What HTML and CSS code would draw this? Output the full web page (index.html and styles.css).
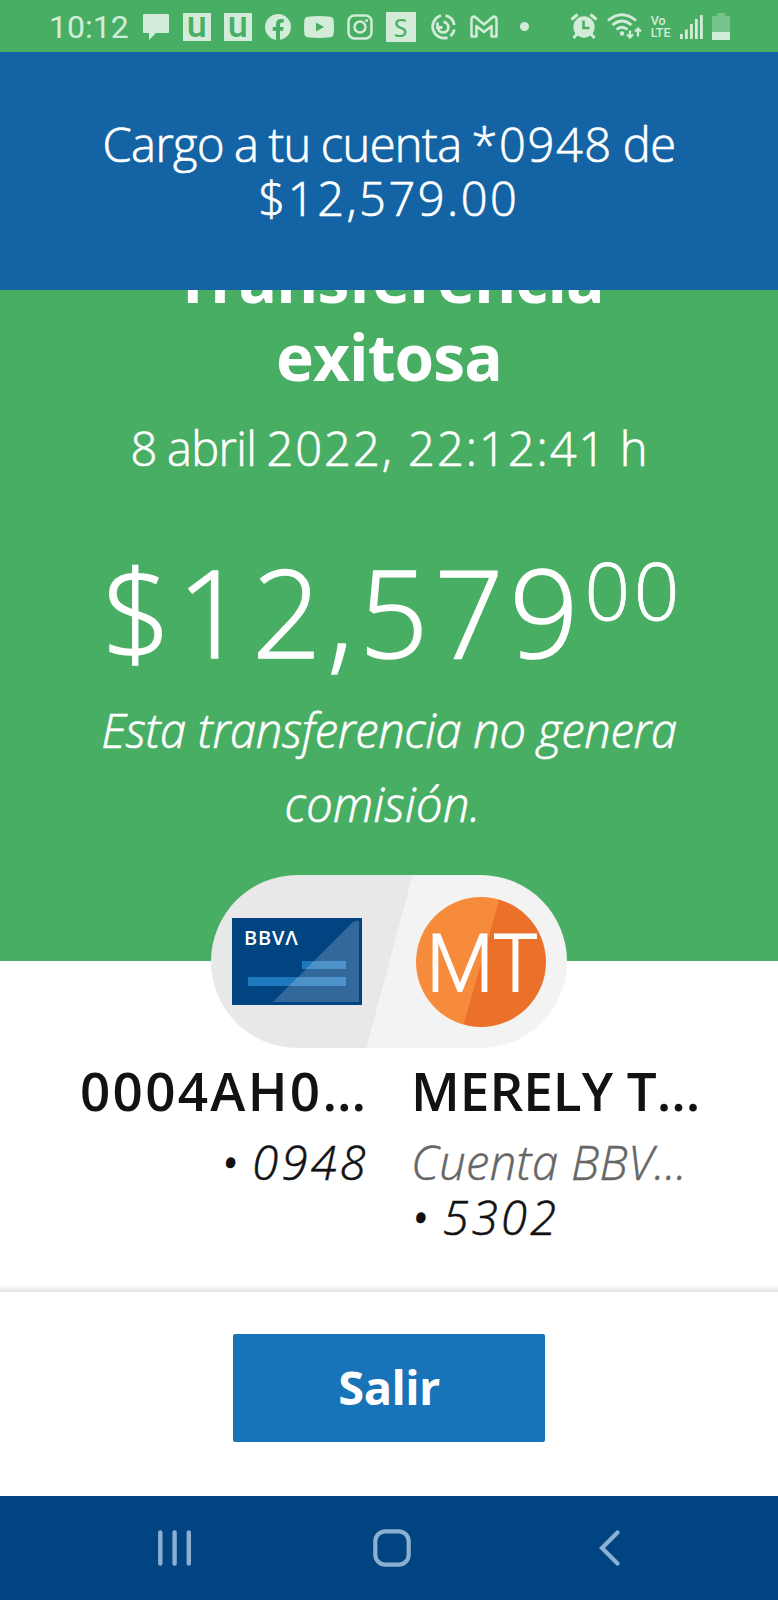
FILE: index.html
```html
<!DOCTYPE html>
<html lang="es">
<head>
<meta charset="UTF-8" />
<meta name="viewport" content="width=device-width, initial-scale=1" />
<title>Transferencia exitosa</title>
<link rel="stylesheet" href="styles.css">
</head>
<body>

<!-- Barra de estado -->
<div class="status-bar">
  <span class="clock">10:12</span>
  <div class="status-icons">
    <svg width="28" height="28" viewBox="0 0 28 28"><path fill="currentColor" d="M2 1h24a1 1 0 0 1 1 1v17a1 1 0 0 1-1 1H14l-7 7v-7H2a1 1 0 0 1-1-1V2a1 1 0 0 1 1-1z"/></svg>
    <span class="tile tile-u">u</span>
    <span class="tile tile-u">u</span>
    <svg width="26" height="26" viewBox="0 0 24 24"><path fill="currentColor" d="M24 12A12 12 0 1 0 10.1 23.9v-8.4h-3V12h3V9.400c0-3 1.800-4.700 4.500-4.700 1.300 0 2.700.2 2.700.2v3h-1.500c-1.500 0-1.900.9-1.900 1.900V12h3.300l-.5 3.500h-2.800v8.400A12 12 0 0 0 24 12z"/></svg>
    <svg width="30" height="22" viewBox="0 0 30 22"><path fill="currentColor" fill-rule="evenodd" d="M4 .7Q15-.5 26 .7q3.300.3 3.600 3.600.7 6.700 0 13.400-.3 3.300-3.600 3.600-11 1.200-22 0Q.7 21 .4 17.700q-.7-6.700 0-13.400Q.7 1 4 .7zM12 6.500v9l8-4.500z"/></svg>
    <svg width="26" height="26" viewBox="0 0 26 26" fill="none" stroke="currentColor" stroke-width="2.500"><rect x="1.500" y="1.500" width="23" height="23" rx="6"/><circle cx="13" cy="13" r="5.500"/><circle cx="19.600" cy="6.400" r="1.500" fill="currentColor" stroke="none"/></svg>
    <span class="tile tile-s">S</span>
    <svg width="28" height="28" viewBox="0 0 28 28" fill="none" stroke="currentColor" stroke-width="2.800"><path d="M12 2.500A11.500 11.500 0 0 0 18.500 24.700M16.500 2.700A11.500 11.500 0 0 1 25.300 12M25.300 16.500A11.500 11.500 0 0 1 21.500 23"/><path d="M9 15a5.200 5.200 0 1 0 5.500-6"/><path d="M8.500 9.500v5h5"/></svg>
    <svg width="28" height="24" viewBox="0 0 28 24" fill="none" stroke="currentColor" stroke-width="2.500" stroke-linejoin="round"><path d="M1.500 4.500Q1.500 1.500 4.500 1.500L14 9.500 23.500 1.500q3 0 3 3v17h-5V11L14 17 6.500 11v10.500h-5z"/></svg>
    <span class="dot"></span>
  </div>
  <div class="system-icons">
    <svg width="28" height="27" viewBox="0 0 28 27"><circle cx="14" cy="14" r="10.700" fill="currentColor"/><path d="M1.500 6.500l6-5M26.500 6.500l-6-5M7 21l-3.500 4M21 21l3.500 4" stroke="currentColor" stroke-width="3"/><path class="cut" d="M13.500 7.500v7.500h6" fill="none" stroke-width="2.600"/></svg>
    <svg width="35" height="27" viewBox="0 0 35 27" fill="none" stroke="currentColor" stroke-width="2.800"><path d="M1 7.500Q15-4 29 7.500M5.500 12Q15 4 24.500 12M9.500 16.500q5.500-4.500 11 0"/><circle cx="15" cy="20.500" r="2.200" fill="currentColor" stroke="none"/><path d="M23 17.500v7M20 21.500l3 3 3-3M31 23.500v-7M28 18.500l3-3 3 3" stroke-width="2.200"/></svg>
    <span class="volte">Vo<br>LTE</span>
    <svg width="24" height="25" viewBox="0 0 24 25" fill="currentColor"><path d="M1 20h2.800v5H1zM6 15.500h2.800V25H6zM11 10h2.800v15H11zM16 5h2.800v20H16zM21 1h2.800v24H21z"/></svg>
    <svg width="18" height="27" viewBox="0 0 18 27" fill="currentColor"><path opacity=".35" d="M5 0h8v3h4q1 0 1 1v15H0V4q0-1 1-1h4z"/><path d="M0 19h18v7q0 1-1 1H1q-1 0-1-1z"/></svg>
  </div>
</div>

<div class="notice"><span class="words">Cargo a tu cuenta </span><span class="digits">*0948</span><span class="words"> de</span><br><span class="digits wide">$12,579.00</span></div>

<main class="summary">
  <h1 class="title">Transferencia<br>exitosa</h1>
  <p class="date"><span class="words">8 abril </span><span class="digits">2022, 22:12:41</span> h</p>
  <div class="amount"><span class="whole">$12,579</span><span class="cents">00</span></div>
  <p class="fee">Esta transferencia no genera<br><span class="fee-end">comisión.&nbsp;</span></p>
</main>

<section class="accounts">
  <div class="pill">
    <div class="card">
      <span class="card-brand">BBVΛ</span>
      <svg class="card-art" width="130" height="87" viewBox="0 0 130 87"><path fill="#1f78bd" d="M70 43h44v8H70zM16 59h98v9H16z"/><path fill="#fff" opacity=".2" d="M41 84L121 4q6-3 6 0v80z"/></svg>
    </div>
    <div class="avatar">MT</div>
  </div>
  <div class="columns">
    <div class="from">
      <div class="name"><span class="holder">0004AH0</span>...</div>
      <div class="number"><span class="bullet">•</span> 0948</div>
    </div>
    <div class="to">
      <div class="name">MERELY T...</div>
      <div class="bank">Cuenta BBV...</div>
      <div class="number"><span class="bullet">•</span> 5302</div>
    </div>
  </div>
</section>

<footer class="actions">
  <button class="exit-btn">Salir</button>
</footer>

<!-- Botones de navegación -->
<nav class="nav-bar">
  <svg width="34" height="36" viewBox="0 0 34 36" stroke="currentColor" stroke-width="4.400" stroke-linecap="round"><path d="M2.300 2.500v31M16.600 2.500v31M30.800 2.500v31"/></svg>
  <svg class="home" width="38" height="38" viewBox="0 0 38 38" fill="none" stroke="currentColor" stroke-width="4.200"><rect x="2.300" y="2.300" width="33.400" height="33.400" rx="10"/></svg>
  <svg width="21" height="36" viewBox="0 0 21 36" fill="none" stroke="currentColor" stroke-width="4.200" stroke-linecap="round"><path d="M18.500 2.500L3 18l15.500 15.500"/></svg>
</nav>

</body>
</html>
```
FILE: styles.css
```css
* {
  box-sizing: border-box;
}
body {
  margin: 0;
  width: 778px;
  height: 1600px;
  overflow: hidden;
  background: #fff;
  font-family: 'Open Sans', 'Noto Sans', sans-serif;
  font-weight: 300;
  color: #121212;
  display: flex;
  flex-direction: column;
}
.status-bar {
  height: 52px;
  flex: none;
  background: #48ae64;
  color: #d2ecd9;
  display: flex;
  align-items: center;
  padding: 1px 48px 0 49px;
}
.clock {
  font: 400 32px/36px Roboto, sans-serif;
}
.status-icons {
  display: flex;
  align-items: center;
  gap: 13px;
  margin-left: 13px;
}
.tile {
  width: 28px;
  height: 28px;
  background: #d2ecd9;
  color: #48ae64;
  text-align: center;
}
.tile-u {
  font: 500 36px/24px Roboto, sans-serif;
}
.tile-s {
  width: 30px;
  height: 30px;
  font: 400 25px/30px 'Noto Sans', sans-serif;
}
.dot {
  width: 9px;
  height: 9px;
  border-radius: 50%;
  background: #d2ecd9;
  margin-left: 9px;
}
.system-icons {
  display: flex;
  align-items: center;
  gap: 8.7px;
  margin-left: auto;
}
.cut {
  stroke: #48ae64;
}
.volte {
  width: 20px;
  font: 500 12.5px/12px Roboto, sans-serif;
}
.notice {
  height: 238px;
  flex: none;
  background: #1464a5;
  color: #fff;
  padding-top: 65px;
  text-align: center;
  font-size: 47px;
  line-height: 54px;
}
.notice,
.date,
.fee {
  -webkit-text-stroke: 0.7px #fff;
}
.words {
  letter-spacing: -0.6px;
  word-spacing: -1.5px;
}
.digits {
  letter-spacing: 1.6px;
}
.wide {
  letter-spacing: 2.5px;
}
.summary {
  height: 671px;
  flex: none;
  overflow: hidden;
  background: #48ae64;
  color: #fff;
  text-align: center;
}
.title {
  margin: -50px 0 25px;
  font-size: 64px;
  font-weight: 700;
  line-height: 78px;
  letter-spacing: -0.9px;
}
.date {
  margin: 0 0 71px;
  font-size: 47px;
  line-height: 54px;
}
.date .digits {
  letter-spacing: 2px;
}
.amount {
  display: flex;
  justify-content: center;
  align-items: flex-start;
  padding-left: 7px;
  margin-bottom: 17px;
}
.whole {
  font-size: 121px;
  line-height: 130px;
  letter-spacing: 6px;
  -webkit-text-stroke: 1.6px #fff;
}
.cents {
  font-size: 80px;
  line-height: 90px;
  margin-top: -2px;
  letter-spacing: 3.5px;
  -webkit-text-stroke: 0.8px #fff;
}
.fee {
  margin: 0;
  font-size: 47px;
  font-style: italic;
  line-height: 74px;
  letter-spacing: -0.3px;
}
.fee-end {
  letter-spacing: 0.4px;
}
.accounts {
  height: 331px;
  flex: none;
  display: flex;
  flex-direction: column;
  align-items: center;
  background: linear-gradient(#fff, #e4e4e4) bottom / 100% 7px no-repeat;
}
.pill {
  width: 356px;
  height: 173px;
  flex: none;
  margin-top: -86px;
  border-radius: 87px;
  background: linear-gradient(105deg, #e8e8e8 50%, #f3f3f3 50.2%);
  display: flex;
  align-items: center;
  justify-content: space-between;
  padding: 0 21px;
}
.card {
  position: relative;
  width: 130px;
  height: 87px;
  background: #004481;
}
.card-art {
  display: block;
}
.card-brand {
  position: absolute;
  left: 12px;
  top: 9px;
  color: #fff;
  font: 600 20px/22px 'Open Sans', sans-serif;
  letter-spacing: 0.8px;
}
.avatar {
  width: 130px;
  height: 130px;
  border-radius: 50%;
  background: linear-gradient(106deg, #f68b3c 50%, #eb712a 50.5%);
  color: #fff;
  font-size: 80px;
  line-height: 125px;
  text-align: center;
  white-space: nowrap;
  -webkit-text-stroke: 1.8px #fff;
}
.columns {
  align-self: stretch;
  display: grid;
  grid-template-columns: 366px 1fr;
  column-gap: 45px;
  padding-top: 16px;
}
.from {
  text-align: right;
}
.from .number {
  margin-right: -3px;
}
.name {
  font-size: 53px;
  font-weight: 600;
  line-height: 54px;
  margin-bottom: 17px;
}
.holder {
  letter-spacing: 2.3px;
}
.number,
.bank {
  font-size: 47px;
  font-style: italic;
  line-height: 55px;
}
.number {
  letter-spacing: 3.3px;
  -webkit-text-stroke: 0.6px #121212;
}
.bullet {
  letter-spacing: -1.5px;
  -webkit-text-stroke: 2.5px #121212;
}
.bank {
  color: #666;
  letter-spacing: 0.4px;
  -webkit-text-stroke: 0.5px #666;
}
.actions {
  flex: 1;
  display: flex;
  justify-content: center;
  align-items: flex-start;
  padding-top: 42px;
}
.exit-btn {
  width: 312px;
  height: 108px;
  border: none;
  border-radius: 2px;
  background: #1973b8;
  color: #fff;
  font: 700 47px/60px 'Open Sans', sans-serif;
  letter-spacing: -0.6px;
  padding: 0 0 2px;
}
.nav-bar {
  height: 104px;
  flex: none;
  background: #004481;
  color: #8cb0d1;
  display: flex;
  justify-content: space-between;
  align-items: center;
  padding: 0 158px;
}
.home {
  margin-right: 8px;
}
```
